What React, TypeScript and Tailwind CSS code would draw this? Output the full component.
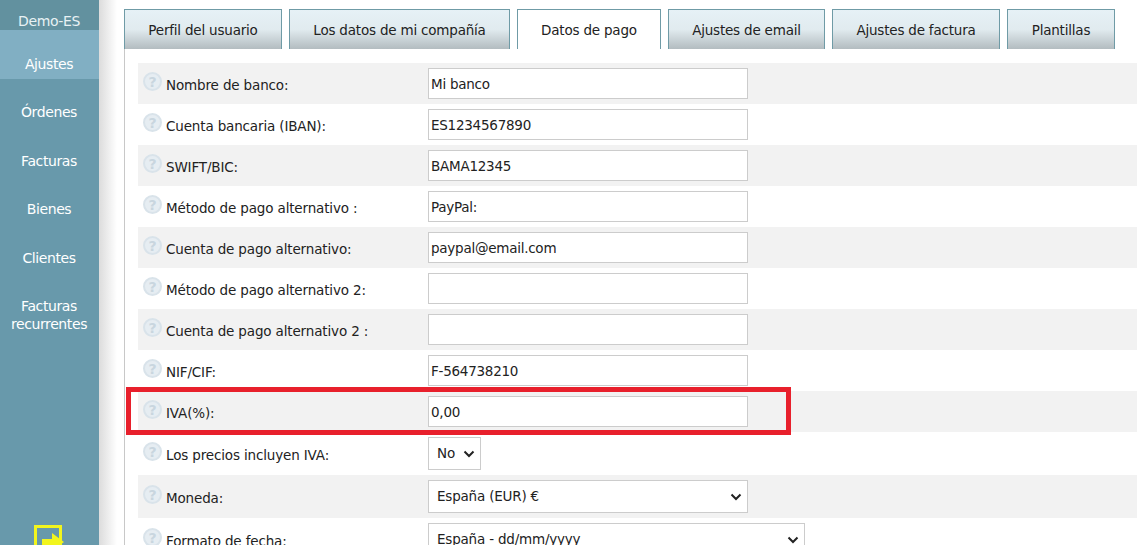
const sans = { fontFamily: '"DejaVu Sans", sans-serif' };

const menu = ['Ajustes', 'Órdenes', 'Facturas', 'Bienes', 'Clientes'];
const tabs = [
    { label: 'Perfil del usuario', width: 'w-[158px]' },
    { label: 'Los datos de mi compañía', width: 'w-[221px]' },
    { label: 'Datos de pago', width: 'w-[144px]', active: true },
    { label: 'Ajustes de email', width: 'w-[157px]' },
    { label: 'Ajustes de factura', width: 'w-[168px]' },
    { label: 'Plantillas', width: 'w-[108px]' },
];
const textRows = [
    { label: 'Nombre de banco:', value: 'Mi banco' },
    { label: 'Cuenta bancaria (IBAN):', value: 'ES1234567890' },
    { label: 'SWIFT/BIC:', value: 'BAMA12345' },
    { label: 'Método de pago alternativo :', value: 'PayPal:' },
    { label: 'Cuenta de pago alternativo:', value: 'paypal@email.com' },
    { label: 'Método de pago alternativo 2:', value: '' },
    { label: 'Cuenta de pago alternativo 2 :', value: '' },
    { label: 'NIF/CIF:', value: 'F-564738210' },
    { label: 'IVA(%):', value: '0,00' },
];

function HelpIcon() {
    return (
        <div className="w-[19px] h-[19px] -mt-[4px] rounded-full bg-[#e6edf2] border-2 border-[#d9e3ea] flex items-center justify-center text-[14px] font-bold leading-none text-[#c9d6df] shrink-0">
            ?
        </div>
    );
}

function Chevron() {
    return (
        <svg width="12" height="8" viewBox="0 0 12 8" className="shrink-0">
            <path d="M1.5 1.5 L6 6 L10.5 1.5" fill="none" stroke="#222" strokeWidth="2" />
        </svg>
    );
}

function RowLabel({ text }: { text: string }) {
    return (
        <div className="w-[290px] pl-[5px] flex items-center gap-[4px] shrink-0">
            <HelpIcon />
            <span className="text-[13.5px] tracking-[-0.15px] text-[#222] whitespace-nowrap mt-[4px]">{text}</span>
        </div>
    );
}

function SelectBox({ value, width }: { value: string; width: string }) {
    return (
        <div className={`${width} h-[33px] bg-white border border-[#ccc] flex items-center justify-between pl-2 pr-[5px] text-[13.5px] tracking-[-0.2px] text-[#222]`}>
            <span className="whitespace-nowrap">{value}</span>
            <Chevron />
        </div>
    );
}

export default function App() {
    return (
        <div className="relative w-[1137px] h-[545px] overflow-hidden bg-white flex" style={sans}>
            <aside className="w-[99px] h-full bg-[#6899ab] shrink-0 flex flex-col items-center text-[14px] tracking-[-0.4px] text-white relative">
                <div className="w-full h-[30px] bg-[#62919f] flex items-center justify-center pt-[13px] pr-[1px] text-[#e8f1f4]">Demo-ES</div>
                {menu.map((item, i) => (
                    <div
                        key={item}
                        className={`w-full h-[48.5px] flex items-center justify-center pt-[20px] pr-[1px] ${i === 0 ? 'bg-[#81afc3]' : ''}`}
                    >
                        {item}
                    </div>
                ))}
                <div className="w-full pt-[24px] pr-[1px] text-center leading-[18px]">
                    Facturas
                    <br />
                    recurrentes
                </div>
                <div className="mt-auto -mb-[8px] mr-[1px]">
                    <svg width="30" height="28" viewBox="0 0 30 28" className="block">
                        <path d="M1.5 1.5 H26.5 V26.5 H1.5 Z" fill="none" stroke="#f2f51d" strokeWidth="3" />
                        <path d="M8 14 H18 V8 L30 17 L18 26 V21 H8 Z" fill="#f2f51d" />
                    </svg>
                </div>
            </aside>

            <main className="relative flex-1 min-w-0 bg-gradient-to-r from-[#dcdcdc] via-white via-[18px] to-white pl-[25px] pt-[9px]">
                <div className="flex gap-[7px] h-[40px]">
                    {tabs.map(tab => (
                        <div
                            key={tab.label}
                            className={`${tab.width} shrink-0 h-[40px] pt-[2px] border border-b-0 border-[#6f9ba6] flex items-center justify-center text-[13.5px] tracking-[-0.2px] text-[#222] ${tab.active ? 'bg-white' : 'bg-gradient-to-b from-[#e6f1f6] via-[#e1ebef] to-[#b3bcc0]'}`}
                        >
                            {tab.label}
                        </div>
                    ))}
                </div>
                <div className="border-l border-[#c8c8c8] pl-[13px] pt-[14px] bg-white">
                    {textRows.map((row, i) => (
                        <div key={row.label} className={`h-[41px] flex items-center ${i % 2 === 0 ? 'bg-[#f2f2f2]' : ''}`}>
                            <RowLabel text={row.label} />
                            <div className="w-[320px] h-[31px] pt-[2px] bg-white border border-[#ccc] flex items-center pl-[2px] text-[13.5px] tracking-[-0.25px] text-[#222]">
                                {row.value}
                            </div>
                        </div>
                    ))}
                    <div className="h-[43px] flex items-center">
                        <RowLabel text="Los precios incluyen IVA:" />
                        <SelectBox value="No" width="w-[53px]" />
                    </div>
                    <div className="h-[43px] flex items-center bg-[#f2f2f2]">
                        <RowLabel text="Moneda:" />
                        <SelectBox value="España (EUR) €" width="w-[320px]" />
                    </div>
                    <div className="h-[43px] flex items-center">
                        <RowLabel text="Formato de fecha:" />
                        <SelectBox value="España - dd/mm/yyyy" width="w-[377px]" />
                    </div>
                </div>
                <div className="absolute left-[27px] top-[387px] w-[665px] h-[48px] border-[5px] border-[#e8202c]" />
            </main>
        </div>
    );
}
